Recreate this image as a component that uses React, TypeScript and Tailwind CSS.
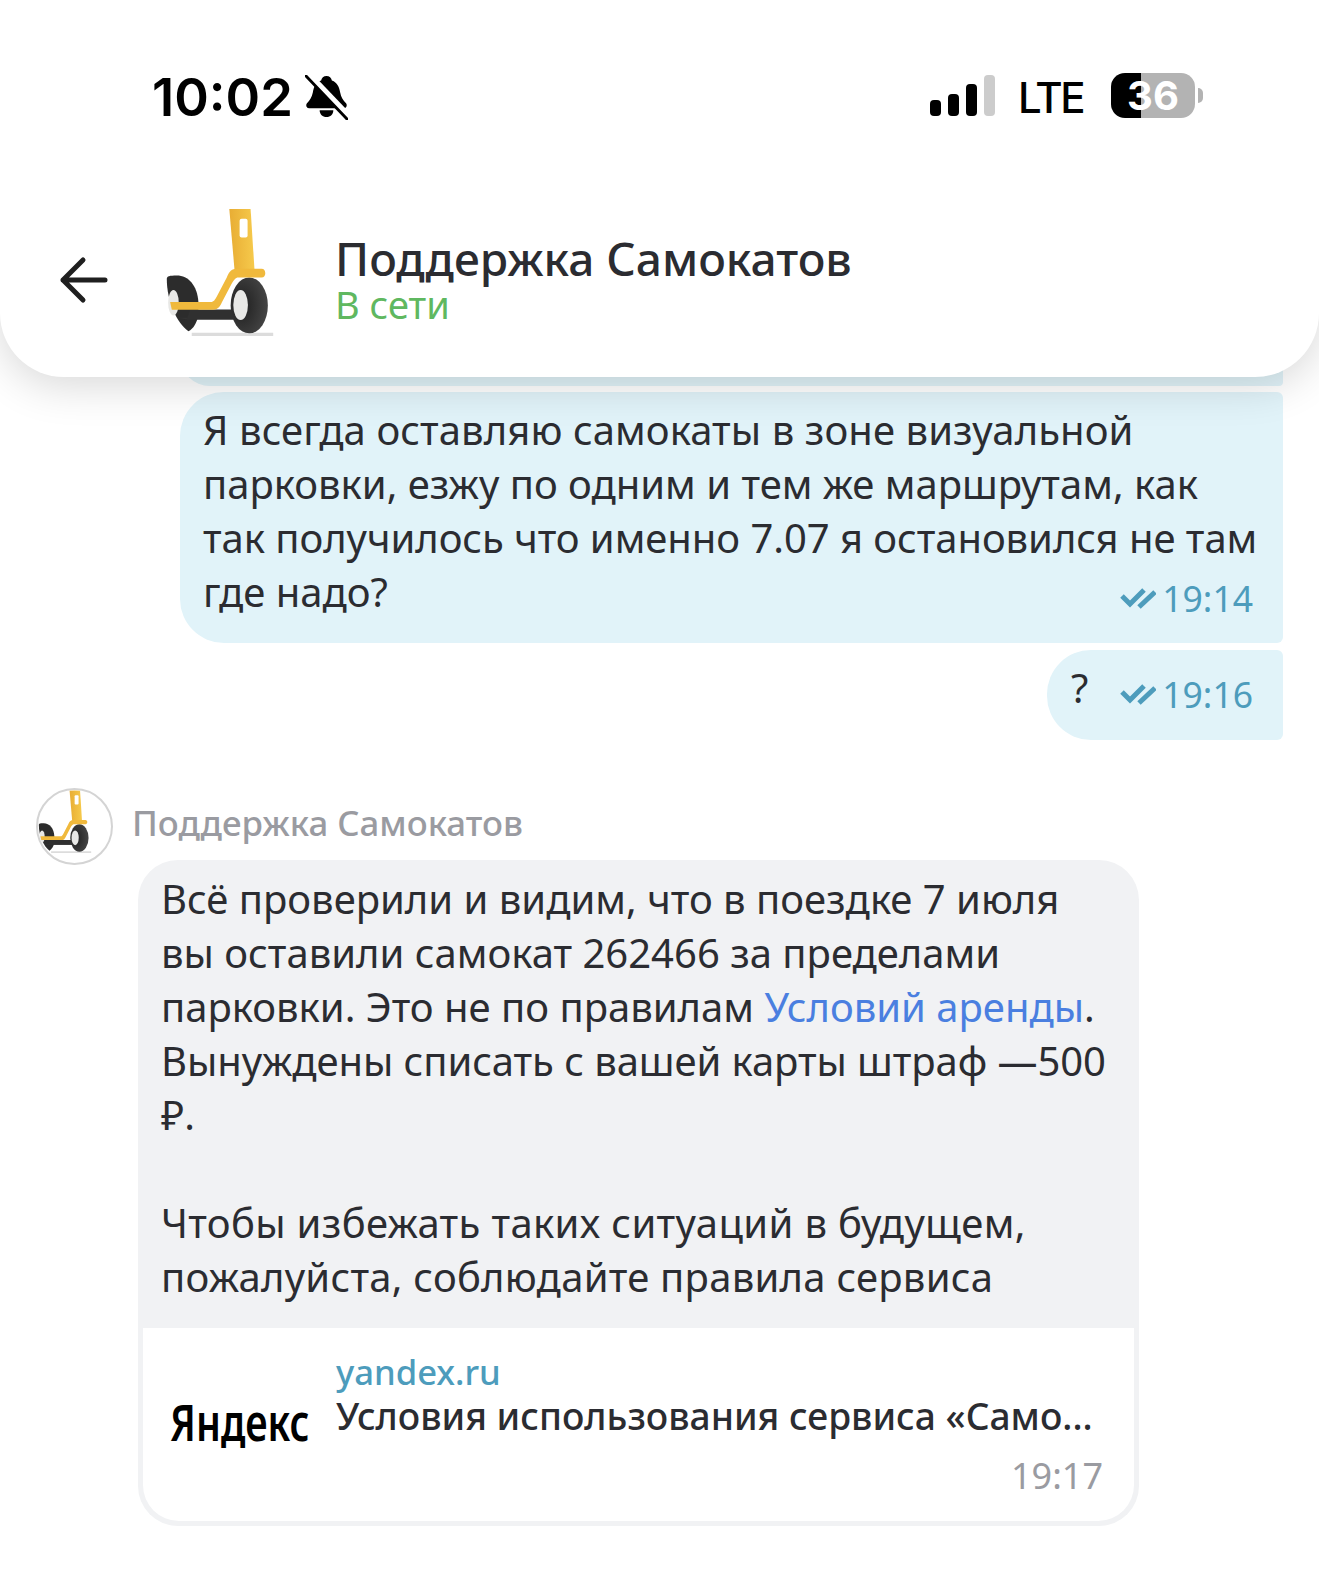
function BellOff() {
  return (
    <svg width="43" height="45" viewBox="0 0 44 46" className="block">
      <path d="M22 1c3 0 5 2 5.500 4.500C33 7.500 35 12 36 18c.8 5 3 8 6 11 1.500 2 .5 5-2 5H4c-2.500 0-3.500-3-2-5 3-3 5-6 6-11 1-6 3-10.500 8.500-12.500C17 3 19 1 22 1z" fill="#000" />
      <path d="M15 36h14c0 4-3 7-7 7s-7-3-7-7z" fill="#000" />
      <path d="M3 -1 L45 43" stroke="#fff" strokeWidth="7" />
      <path d="M1 1 L43 45" stroke="#000" strokeWidth="3" strokeLinecap="round" />
    </svg>
  );
}

function Scooter({ className }: { className?: string }) {
  return (
    <svg viewBox="495 55 330 385" className={className}>
      <defs>
        <linearGradient id="pole" x1="0" x2="1" y1="0" y2="0">
          <stop offset="0" stopColor="#e8ad34" />
          <stop offset="1" stopColor="#f6ca4c" />
        </linearGradient>
        <radialGradient id="tyre" cx="0.3" cy="0.5" r="0.8">
          <stop offset="0" stopColor="#1f1f1f" />
          <stop offset="1" stopColor="#4a4a4a" />
        </radialGradient>
      </defs>
      <path d="M575 430 H820 V440 H575z" fill="#dcdcdc" />
      <path d="M500 268c0-8 8-10 30-10 35 0 62 30 65 80v40c-5 22-15 40-30 48-35-25-65-90-65-158z" fill="#2c2c2c" />
      <ellipse cx="520" cy="340" rx="16" ry="38" fill="#e8e8e6" />
      <path d="M535 385 H720 V390 H560z" fill="#333" />
      <path d="M570 360 H720 V390 H560z" fill="#303030" />
      <ellipse cx="748" cy="348" rx="56" ry="84" fill="url(#tyre)" />
      <ellipse cx="722" cy="347" rx="22" ry="45" fill="#e8e8e6" />
      <path d="M688 58 H752 L764 245 H704z" fill="url(#pole)" />
      <rect x="719" y="87" width="24" height="57" rx="6" fill="#fff" />
      <path d="M510 338 H632 C642 338 645 330 650 322 L680 265 C688 245 695 238 712 238 H785 C800 238 800 264 785 264 H712 C704 266 700 275 695 283 L665 340 C660 352 652 361 640 361 H515z" fill="#f0b93c" />
    </svg>
  );
}

function Checks() {
  return (
    <svg width="36" height="22" viewBox="0 0 36 22" className="block">
      <path d="M2 9l8 8L24 3" fill="none" stroke="#4d9cbc" strokeWidth="5" />
      <path d="M19 20L35 5" fill="none" stroke="#4d9cbc" strokeWidth="5" />
    </svg>
  );
}

function Time({ value }: { value: string }) {
  return (
    <div className="flex items-center gap-[6px] text-[35.5px] text-[#4d9cbc] leading-[54px]">
      <Checks />
      <span>{value}</span>
    </div>
  );
}

export default function App() {
  return (
    <div className="w-[1319px] h-[1571px] overflow-hidden bg-white text-[#2b2c31] text-[40px] leading-[54px] font-['Noto_Sans',sans-serif]">
      <header className="relative z-10 h-[377px] bg-white rounded-b-[64px] shadow-[0_8px_44px_rgba(0,0,0,0.16)]">
        <div className="flex items-center h-[195px] pl-[152px] pr-[116px] font-['Inter',sans-serif] text-black">
          <span className="text-[52.5px] font-semibold leading-none">10:02</span>
          <span className="ml-[12px]">
            <BellOff />
          </span>
          <div className="ml-auto mb-[4px] flex items-end gap-[7px] h-[41px]">
            <span className="w-[11px] h-[16px] rounded-[4px] bg-black" />
            <span className="w-[11px] h-[22px] rounded-[4px] bg-black" />
            <span className="w-[11px] h-[32px] rounded-[4px] bg-black" />
            <span className="w-[11px] h-[41px] rounded-[4px] bg-[#cccccc]" />
          </div>
          <span className="ml-[23px] text-[42px] tracking-[-2.5px] font-medium leading-none">LTE</span>
          <div className="ml-[28px] mb-[4px] w-[84px] h-[45px] rounded-[14px] flex items-center justify-center bg-[linear-gradient(90deg,#000_36%,#b3b3b3_36%)] text-white text-[40px] font-bold">
            36
          </div>
          <span className="ml-[3px] mb-[4px] w-[5px] h-[15px] rounded-r-full bg-[#b3b3b3]" />
        </div>
        <div className="flex items-center h-[182px] pb-[14px]">
          <svg width="50" height="50" viewBox="0 0 50 50" className="ml-[58px]">
            <path d="M47 26H5M25 6L5 26l20 20" fill="none" stroke="#1f1f1f" strokeWidth="5" strokeLinecap="round" strokeLinejoin="round" />
          </svg>
          <Scooter className="ml-[57px] mb-[14px] w-[110px] h-[128px]" />
          <div className="ml-[60px]">
            <div className="text-[46px] font-medium leading-[50px]">Поддержка Самокатов</div>
            <div className="text-[38px] leading-[42px] text-[#5fb860]">В сети</div>
          </div>
        </div>
      </header>

      {/* previous message, mostly hidden under the header */}
      <div className="mt-[-51px] ml-[180px] w-[1103px] h-[60px] bg-[#e1f3f9] rounded-l-[44px] rounded-r-[6px]" />

      <div className="mt-[6px] ml-[180px] w-[1103px] h-[251px] bg-[#e1f3f9] rounded-l-[44px] rounded-r-[6px] pl-[23px] pr-[30px] pt-[11px]">
        <div className="whitespace-nowrap tracking-[0.08px]">Я всегда оставляю самокаты в зоне визуальной</div>
        <div className="whitespace-nowrap">парковки, езжу по одним и тем же маршрутам, как</div>
        <div className="whitespace-nowrap tracking-[-0.05px]">так получилось что именно 7.07 я остановился не там</div>
        <div className="flex justify-between">
          <span>где надо?</span>
          <div className="mt-[6px]">
            <Time value="19:14" />
          </div>
        </div>
      </div>

      <div className="mt-[7px] ml-[1047px] w-[236px] h-[90px] bg-[#e1f3f9] rounded-l-[44px] rounded-r-[6px] pl-[24px] pr-[30px] pt-[11px] flex justify-between">
        <span>?</span>
        <div className="mt-[6px]">
          <Time value="19:16" />
        </div>
      </div>

      <div className="mt-[48px] ml-[36px] flex items-center gap-[19px]">
        <div className="w-[77px] h-[77px] rounded-full border-2 border-[#d4d4d4] overflow-hidden flex items-center justify-center">
          <Scooter className="mr-[20px] mb-[10px] w-[54px] h-[63px] shrink-0" />
        </div>
        <span className="mb-[8px] text-[34.8px] font-medium text-[#9a9ba1]">Поддержка Самокатов</span>
      </div>

      <div className="mt-[-5px] ml-[138px] w-[1001px] bg-[#f1f2f4] rounded-[40px] p-[5px]">
        <div className="pl-[18px] pt-[7px] pb-[24px]">
          <div>Всё проверили и видим, что в поездке 7 июля</div>
          <div>вы оставили самокат 262466 за пределами</div>
          <div>
            парковки. Это не по правилам <span className="text-[#4a7fe0]">Условий аренды</span>.
          </div>
          <div className="tracking-[-0.07px]">Вынуждены списать с вашей карты штраф —500</div>
          <div>₽.</div>
          <div className="h-[54px]" />
          <div className="tracking-[0.35px]">Чтобы избежать таких ситуаций в будущем,</div>
          <div className="tracking-[0.25px]">пожалуйста, соблюдайте правила сервиса</div>
        </div>
        <div className="bg-white rounded-b-[36px] h-[193px] pl-[27px] pr-[31px] flex flex-col">
          <div className="flex items-start">
            <span className="w-[166px] mt-[67px] text-[50px] leading-[54px] font-semibold text-black whitespace-nowrap origin-left scale-x-[0.78]">Яндекс</span>
            <div className="mt-[22px]">
              <div className="text-[34.6px] leading-[44px] font-medium text-[#4d9cbc]">yandex.ru</div>
              <div className="text-[37.2px] leading-[44px] font-medium whitespace-nowrap">Условия использования сервиса «Само...</div>
            </div>
          </div>
          <div className="mt-auto mb-[21px] text-right text-[36px] leading-[54px] text-[#9a9ba1]">19:17</div>
        </div>
      </div>
    </div>
  );
}
